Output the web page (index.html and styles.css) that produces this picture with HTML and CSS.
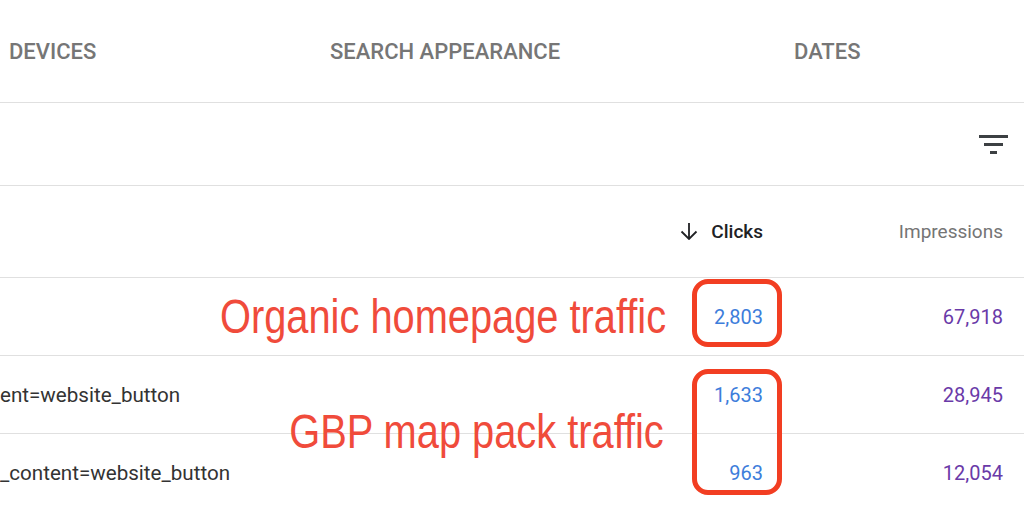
FILE: index.html
```html
<!DOCTYPE html>
<html lang="en">
<head>
<meta charset="UTF-8">
<meta name="viewport" content="width=device-width, initial-scale=1.0">
<title>Performance report</title>
<link rel="stylesheet" href="styles.css">
</head>
<body>

<!-- Report tabs -->
<div class="tabs">
    <div class="tab tab-devices">DEVICES</div>
    <div class="tab tab-appearance">SEARCH APPEARANCE</div>
    <div class="tab">DATES</div>
</div>

<!-- Filter toolbar -->
<div class="toolbar">
    <svg class="filter-icon" width="29" height="19" viewBox="0 0 29 19">
        <rect x="0" y="0" width="29" height="3" fill="#3c4043"/>
        <rect x="5" y="8" width="19" height="3" fill="#3c4043"/>
        <rect x="11" y="16" width="7" height="3" fill="#3c4043"/>
    </svg>
</div>

<!-- Table header -->
<div class="table-head">
    <div class="cell-label"></div>
    <div class="cell-clicks head-clicks">
        <svg class="sort-icon" width="18" height="17" viewBox="0 0 18 17">
            <path d="M9 0v15.5M1.5 8.5L9 16l7.5-7.5" fill="none" stroke="#202124" stroke-width="1.8"/>
        </svg>
        Clicks
    </div>
    <div class="cell-impressions head-impressions">Impressions</div>
</div>

<!-- Table rows with annotations on top -->
<div class="rows">
    <div class="row">
        <div class="cell-label"></div>
        <div class="cell-clicks">2,803</div>
        <div class="cell-impressions">67,918</div>
    </div>
    <div class="row">
        <div class="cell-label">ent=website_button</div>
        <div class="cell-clicks">1,633</div>
        <div class="cell-impressions">28,945</div>
    </div>
    <div class="row">
        <div class="cell-label">_content=website_button</div>
        <div class="cell-clicks">963</div>
        <div class="cell-impressions">12,054</div>
    </div>

    <div class="note note-organic">Organic homepage traffic</div>
    <div class="note note-gbp">GBP map pack traffic</div>
    <div class="mark mark-organic"></div>
    <div class="mark mark-gbp"></div>
</div>

</body>
</html>
```

FILE: styles.css
```css
body {
    margin: 0;
    width: 1024px;
    height: 510px;
    overflow: hidden;
    background: #fff;
    font-family: Roboto, "Liberation Sans", sans-serif;
}
.tabs {
    display: flex;
    align-items: center;
    height: 102px;
    padding-left: 9px;
    border-bottom: 1px solid #e0e0e0;
}
.tab {
    font-size: 22px;
    font-weight: 500;
    color: #767676;
}
.tab-devices {
    width: 321px;
}
.tab-appearance {
    width: 464px;
}
.toolbar {
    display: flex;
    justify-content: flex-end;
    align-items: center;
    height: 82px;
    padding-right: 16px;
    border-bottom: 1px solid #e0e0e0;
}
.filter-icon {
    display: block;
}
.table-head,
.row {
    display: flex;
    align-items: center;
    padding-right: 21px;
}
.table-head {
    height: 91px;
    font-size: 19px;
}
.row {
    height: 77px;
    border-top: 1px solid #e0e0e0;
    font-size: 20px;
}
.cell-label {
    flex: 1;
    font-size: 20.6px;
    color: #333;
    white-space: nowrap;
}
.cell-clicks {
    display: flex;
    justify-content: flex-end;
    align-items: center;
    color: #3d7ddb;
}
.cell-impressions {
    width: 240px;
    text-align: right;
    color: #6a3aa8;
}
.head-clicks {
    color: #202124;
    font-weight: 500;
}
.sort-icon {
    margin-right: 13px;
}
.head-impressions {
    color: #757575;
}
.rows {
    position: relative;
}
/* Arial-width face squeezed to the narrow look of the annotations */
.note {
    position: absolute;
    font-family: "Liberation Sans", Arial, sans-serif;
    font-size: 48px;
    line-height: 48px;
    color: #f04b3b;
    white-space: nowrap;
    transform: scaleX(0.829);
    transform-origin: right center;
}
.note-organic {
    top: 16px;
    right: 358px;
}
.note-gbp {
    top: 131px;
    right: 360px;
}
.mark {
    position: absolute;
    left: 692px;
    width: 80px;
    border: 5px solid #f23e22;
    border-radius: 16px;
}
.mark-organic {
    top: 2px;
    height: 58px;
}
.mark-gbp {
    top: 92px;
    height: 116px;
}
```
